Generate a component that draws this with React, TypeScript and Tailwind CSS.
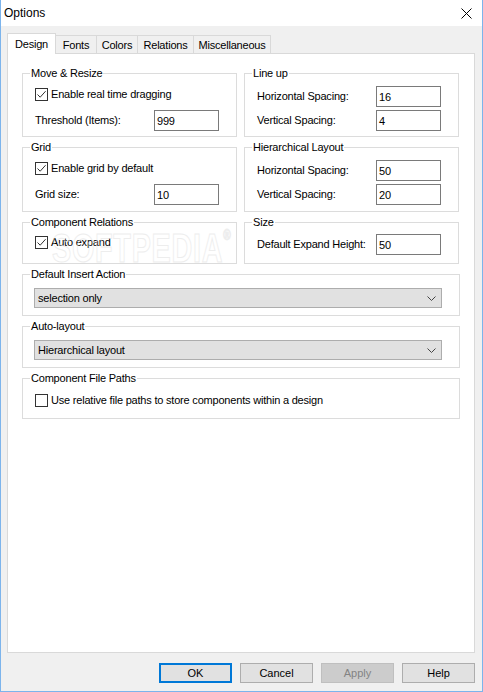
import React from "react";

function CheckBox({ checked }: { checked: boolean }) {
  return (
    <span className="flex h-[13px] w-[13px] shrink-0 items-center justify-center border border-[#333333] bg-white">
      {checked && (
        <svg width="11" height="11" viewBox="0 0 11 11">
          <path d="M1.5 5.5 L4.2 8.2 L9.6 2.2" fill="none" stroke="#333333" strokeWidth="1" />
        </svg>
      )}
    </span>
  );
}

function Group({
  title,
  className = "",
  children,
}: {
  title: string;
  className?: string;
  children: React.ReactNode;
}) {
  return (
    <div className={`flex flex-col border border-[#dcdcdc] ${className}`}>
      <span className="-mt-[8px] ml-[7px] self-start bg-white px-[1px] leading-[14px]">{title}</span>
      {children}
    </div>
  );
}

function Field({ label, value, className = "" }: { label: string; value: string; className?: string }) {
  return (
    <div className={`flex h-[21px] items-center pl-[12px] ${className}`}>
      <span className="w-[119px] shrink-0 pb-[1px]">{label}</span>
      <div className="flex h-[21px] w-[65px] items-center border border-[#7a7a7a] bg-white pl-[2px]">{value}</div>
    </div>
  );
}

function CheckRow({ label, checked, className = "" }: { label: string; checked: boolean; className?: string }) {
  return (
    <div className={`flex h-[16px] items-center gap-[3px] pl-[12px] ${className}`}>
      <CheckBox checked={checked} />
      <span>{label}</span>
    </div>
  );
}

function Select({ value }: { value: string }) {
  return (
    <div className="ml-[11px] mt-[7px] flex h-[20px] w-[408px] items-center justify-between border border-[#adadad] bg-[#e1e1e1] pl-[3px] pr-[5px]">
      <span>{value}</span>
      <svg width="9" height="5" viewBox="0 0 9 5">
        <path d="M0.5 0.5 L4.5 4.5 L8.5 0.5" fill="none" stroke="#444444" strokeWidth="1" />
      </svg>
    </div>
  );
}

export default function App() {
  return (
    <div className="flex h-[692px] w-[483px] flex-col border-x border-b border-[#7cb4ec] font-['Liberation_Sans',Arial,sans-serif] text-[11px] leading-[14px] tracking-[-0.2px] text-black">
      {/* Title bar */}
      <div className="flex h-[26px] shrink-0 items-center justify-between bg-white pl-[3px] pr-[10px]">
        <span className="text-[12px] tracking-normal">Options</span>
        <svg width="11" height="11" viewBox="0 0 11 11">
          <path d="M0.5 0.5 L10.5 10.5 M10.5 0.5 L0.5 10.5" stroke="#000" strokeWidth="1" />
        </svg>
      </div>

      {/* Body */}
      <div className="flex flex-1 flex-col bg-[#f0f0f0] pl-[6px] pr-[7px] pt-[7px]">
        {/* Tabs */}
        <div className="flex h-[20px] items-end">
          <div className="relative z-10 -mb-[1px] flex h-[21px] w-[49px] items-center justify-center border-x border-t border-[#d9d9d9] bg-white">
            Design
          </div>
          <div className="flex h-[18px] w-[41px] items-center justify-center border-r border-t border-[#d9d9d9] pt-[1px]">
            Fonts
          </div>
          <div className="flex h-[18px] w-[41px] items-center justify-center border-r border-t border-[#d9d9d9] pt-[1px]">
            Colors
          </div>
          <div className="flex h-[18px] w-[56px] items-center justify-center border-r border-t border-[#d9d9d9] pt-[1px]">
            Relations
          </div>
          <div className="flex h-[18px] w-[77px] items-center justify-center border-r border-t border-[#d9d9d9] pt-[1px]">
            Miscellaneous
          </div>
        </div>

        {/* Panel */}
        <div className="relative flex flex-1 flex-col gap-[10px] border border-[#d9d9d9] bg-white px-[14px] pt-[19px]">
          <div className="grid grid-cols-[215px_215px] gap-x-[7px] gap-y-[10px]">
            <Group title="Move & Resize" className="pb-[5px]">
              <CheckRow label="Enable real time dragging" checked className="mt-[6px]" />
              <Field label="Threshold (Items):" value="999" className="mt-[8px]" />
            </Group>
            <Group title="Line up" className="pb-[5px]">
              <Field label="Horizontal Spacing:" value="16" className="mt-[6px]" />
              <Field label="Vertical Spacing:" value="4" className="mt-[3px]" />
            </Group>

            <Group title="Grid" className="pb-[6px]">
              <CheckRow label="Enable grid by default" checked className="mt-[6px]" />
              <Field label="Grid size:" value="10" className="mt-[8px]" />
            </Group>
            <Group title="Hierarchical Layout" className="pb-[6px]">
              <Field label="Horizontal Spacing:" value="50" className="mt-[6px]" />
              <Field label="Vertical Spacing:" value="20" className="mt-[3px]" />
            </Group>

            <Group title="Component Relations" className="pb-[8px]">
              <CheckRow label="Auto expand" checked className="mt-[5px]" />
            </Group>
            <Group title="Size" className="pb-[8px]">
              <Field label="Default Expand Height:" value="50" className="mt-[5px]" />
            </Group>
          </div>

          <Group title="Default Insert Action" className="pb-[7px]">
            <Select value="selection only" />
          </Group>

          <Group title="Auto-layout" className="pb-[7px]">
            <Select value="Hierarchical layout" />
          </Group>

          <Group title="Component File Paths" className="pb-[10px]">
            <CheckRow label="Use relative file paths to store components within a design" checked={false} className="mt-[7px]" />
          </Group>

          {/* watermark */}
          <div className="pointer-events-none absolute left-[44px] top-[174px] flex origin-left scale-x-[0.72] items-start opacity-70 select-none">
            <span className="text-[40px] font-bold leading-[40px] tracking-[1px] text-transparent [-webkit-text-stroke:1px_#e6e6e6]">
              SOFTPEDIA
            </span>
            <span className="text-[14px] font-bold leading-[14px] text-transparent [-webkit-text-stroke:1px_#e6e6e6]">®</span>
          </div>
        </div>

        {/* Buttons */}
        <div className="mb-[8px] mt-[10px] flex h-[20px] justify-end gap-[8px] tracking-normal">
          <button className="flex h-[20px] w-[73px] items-center justify-center border-2 border-[#0078d7] bg-[#e1e1e1]">
            OK
          </button>
          <button className="flex h-[20px] w-[73px] items-center justify-center border border-[#adadad] bg-[#e1e1e1]">
            Cancel
          </button>
          <button className="flex h-[20px] w-[73px] items-center justify-center border border-[#bfbfbf] bg-[#cccccc] text-[#838383]">
            Apply
          </button>
          <button className="flex h-[20px] w-[73px] items-center justify-center border border-[#adadad] bg-[#e1e1e1]">
            Help
          </button>
        </div>
      </div>
    </div>
  );
}
